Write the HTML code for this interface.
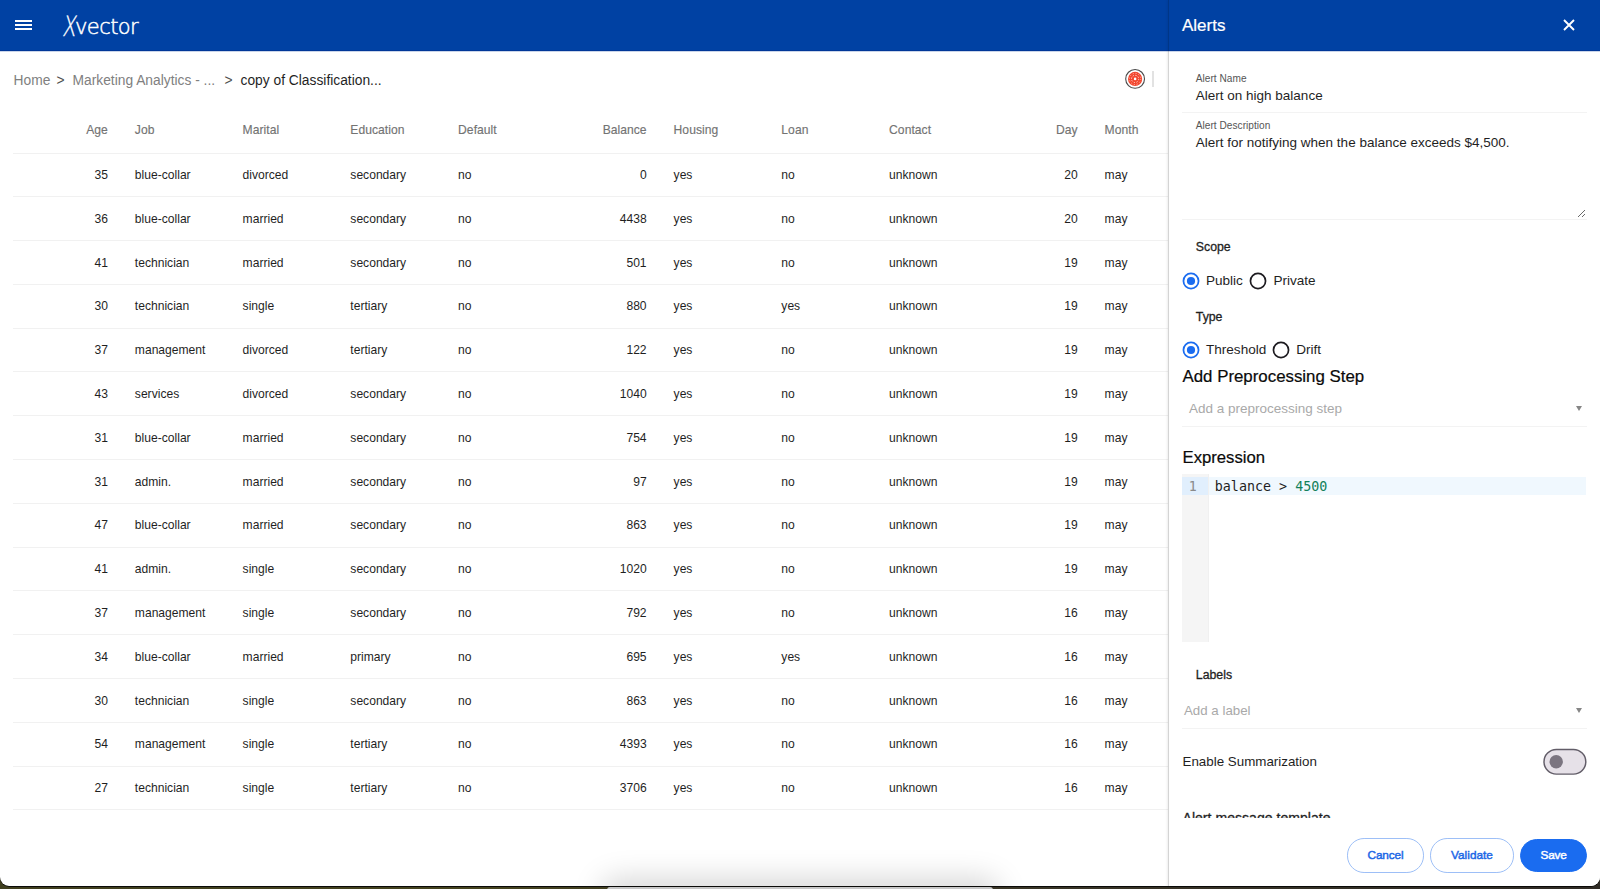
<!DOCTYPE html>
<html lang="en">
<head>
<meta charset="utf-8">
<title>Xvector - Alerts</title>
<style>
*{box-sizing:border-box;margin:0;padding:0}
html,body{width:1600px;height:889px;overflow:hidden}
body{background:linear-gradient(90deg,#3f3e1e 0,#45431f 30%,#3a3626 60%,#2f2b25 100%);font-family:"Liberation Sans",sans-serif;color:#212121;position:relative}
#win{position:absolute;left:0;top:0;width:1600px;height:886px;background:#fff;border-radius:0 0 9px 9px;overflow:hidden}
#winline{position:absolute;left:0;top:0;width:1600px;height:887px;background:#0a0a08;border-radius:0 0 9.5px 9.5px}
#dock{position:absolute;left:607px;top:887px;width:386px;height:4px;background:#c6c6c6;border-radius:3px 3px 0 0}
#dshadow{position:absolute;left:612px;top:890px;width:376px;height:12px;border-radius:8px;box-shadow:0 0 30px 11px rgba(0,0,0,.17)}
#topbar{position:absolute;left:0;top:0;width:1600px;height:52px;background:linear-gradient(#0041a3 0,#0041a3 49.6px,#003596 50.6px,#003596 51px,rgba(0,53,150,.25) 51.4px,rgba(0,53,150,0) 52px)}
.abs{position:absolute;white-space:nowrap}
/* hamburger */
#ham i{position:absolute;left:15.4px;width:16.2px;height:2px;background:#fff;display:block}
/* logo */
#logo{left:74.9px;top:12px;color:#fff;font-family:"DejaVu Sans Light","DejaVu Sans",sans-serif;font-weight:200;font-size:21px;line-height:30px;letter-spacing:-.55px;-webkit-text-stroke:.5px #fff}
#logo .x{position:absolute;left:-14px;top:-.5px;font-size:28px;line-height:30px;letter-spacing:0;display:block;transform-origin:0 100%;transform:scaleX(.7) skewX(-12deg);-webkit-text-stroke:.35px #fff}
/* breadcrumb */
#crumb{left:0;top:71.5px;font-size:13.8px;line-height:18px;color:#808080}
#crumb span{position:absolute;top:0}
#crumb .sep{color:#505050}
#crumb .cur{color:#1f1f1f}
/* table */
#tbl{position:absolute;left:13px;top:106px;width:1185px;border-collapse:collapse;table-layout:fixed;font-size:12.1px}
#tbl th,#tbl td{width:107.75px;height:43.8px;padding:.4px 12.9px 0 14.1px;text-align:left;font-weight:normal;border-bottom:1px solid #f1f1f1;white-space:nowrap;overflow:hidden}
#tbl th{color:#737373;height:47px;padding-top:.5px;padding-bottom:0;letter-spacing:.04px;-webkit-text-stroke:.15px #737373}
#tbl td{color:#1f1f1f}
#tbl .r{text-align:right}
/* panel */
#panel{position:absolute;left:1168px;top:0;width:432px;height:886px;background:#fff}
#pline{position:absolute;left:1168px;top:0;width:1px;height:886px;background:rgba(0,0,0,.17);box-shadow:-1px 0 2px rgba(0,0,0,.10);z-index:5}
#phead{position:absolute;left:0;top:0;width:432px;height:52px;background:linear-gradient(#0041a3 0,#0041a3 49.6px,#003596 50.6px,#003596 51px,rgba(0,53,150,.25) 51.4px,rgba(0,53,150,0) 52px)}

#ptitle{left:14px;top:16.4px;font-size:17px;line-height:20px;color:#fff;-webkit-text-stroke:.2px #fff}
#pclose{position:absolute;left:395.15px;top:19.3px;width:12px;height:12px}
.lbl{font-size:10.1px;line-height:12px;color:#555;letter-spacing:.03px}
.val{font-size:13.5px;line-height:16px;color:#1f1f1f}
.hl{position:absolute;left:14px;width:404.6px;height:1px;background:#f3f3f3}
.sec{font-size:12.3px;line-height:14px;color:#1f1f1f;-webkit-text-stroke:.3px #1f1f1f}
.rl{font-size:13.55px;line-height:16px;color:#1f1f1f}
.h2{font-size:16.85px;line-height:20px;color:#0a0a0a;-webkit-text-stroke:.2px #0a0a0a}
.ph{font-size:13.5px;line-height:16px;color:#a9a9a9}
.tri{position:absolute;width:0;height:0;border-left:3.4px solid transparent;border-right:3.4px solid transparent;border-top:5.8px solid #868686}
#ed{position:absolute;left:14.2px;top:473.6px;width:404px;height:168.1px;background:#fff}
#ed .gut{position:absolute;left:0;top:0;width:27.3px;height:168.1px;background:linear-gradient(#f5f5f5 0,#f5f5f5 3.1px,#e1effd 3.1px,#e1effd 21.1px,#f5f5f5 21.1px);border-right:1.5px solid #f0f0f0}
#ed .act{position:absolute;left:0;top:3.1px;width:404px;height:18px;background:#f0f8fe}
#ed .ln{left:6.6px;top:4px;font-family:"DejaVu Sans Mono","Liberation Mono",monospace;font-size:13.3px;line-height:18px;color:#8a8a8a}
#ed .code{left:32.6px;top:4.4px;font-family:"DejaVu Sans Mono","Liberation Mono",monospace;font-size:13.35px;line-height:18px;color:#1f1f1f}
#ed .num{color:#12805a}
#clip{position:absolute;left:0;top:51px;width:432px;height:767.4px;overflow:hidden}
.btn{position:absolute;top:838.4px;height:34.2px;border-radius:17.1px;border:1px solid #9dbff7;background:#fff;color:#1a66e6;font-size:11.8px;-webkit-text-stroke:.45px currentColor;letter-spacing:-.15px;line-height:32.6px;text-align:center}
.btn.fill{background:#1a6cf0;border-color:#1a6cf0;color:#fff;top:838.9px;height:33.1px;line-height:31.6px}
</style>
</head>
<body>
<div id="winline"></div>
<div id="dock"></div>
<div id="win">
  <div id="topbar">
    <div id="ham"><i style="top:19.6px"></i><i style="top:24px"></i><i style="top:28.4px"></i></div>
    <div id="logo" class="abs"><span class="x">X</span>vector</div>
  </div>
  <div id="crumb" class="abs"><span style="left:13.5px">Home</span> <span class="sep" style="left:56.5px">&gt;</span> <span style="left:72.5px">Marketing Analytics - ...</span> <span class="sep" style="left:224.5px">&gt;</span> <span class="cur" style="left:240.5px">copy of Classification...</span></div>
  <svg class="abs" style="left:1124px;top:68px;width:22px;height:22px" viewBox="0 0 22 22">
    <circle cx="11.1" cy="10.9" r="9.4" fill="#fff" stroke="#4a4a4a" stroke-width="1.1"/>
    <circle cx="11.1" cy="10.9" r="7.1" fill="#f2452d"/>
    <circle cx="11.1" cy="10.9" r="1.3" fill="#fff"/>
    <circle cx="11.1" cy="10.9" r="3.6" fill="none" stroke="#ffd9d2" stroke-width="1" stroke-dasharray="1.3 1.5"/>
    <circle cx="11.1" cy="10.9" r="5.6" fill="none" stroke="#ffc4ba" stroke-width=".8" stroke-dasharray="1.2 1.7"/>
  </svg>
  <div class="abs" style="left:1152px;top:71px;width:1.6px;height:16px;background:#e2e2e2"></div>
  <table id="tbl">
    <tr><th class="r">Age</th><th>Job</th><th>Marital</th><th>Education</th><th>Default</th><th class="r">Balance</th><th>Housing</th><th>Loan</th><th>Contact</th><th class="r">Day</th><th>Month</th></tr>
    <tr><td class="r">35</td><td>blue-collar</td><td>divorced</td><td>secondary</td><td>no</td><td class="r">0</td><td>yes</td><td>no</td><td>unknown</td><td class="r">20</td><td>may</td></tr>
    <tr><td class="r">36</td><td>blue-collar</td><td>married</td><td>secondary</td><td>no</td><td class="r">4438</td><td>yes</td><td>no</td><td>unknown</td><td class="r">20</td><td>may</td></tr>
    <tr><td class="r">41</td><td>technician</td><td>married</td><td>secondary</td><td>no</td><td class="r">501</td><td>yes</td><td>no</td><td>unknown</td><td class="r">19</td><td>may</td></tr>
    <tr><td class="r">30</td><td>technician</td><td>single</td><td>tertiary</td><td>no</td><td class="r">880</td><td>yes</td><td>yes</td><td>unknown</td><td class="r">19</td><td>may</td></tr>
    <tr><td class="r">37</td><td>management</td><td>divorced</td><td>tertiary</td><td>no</td><td class="r">122</td><td>yes</td><td>no</td><td>unknown</td><td class="r">19</td><td>may</td></tr>
    <tr><td class="r">43</td><td>services</td><td>divorced</td><td>secondary</td><td>no</td><td class="r">1040</td><td>yes</td><td>no</td><td>unknown</td><td class="r">19</td><td>may</td></tr>
    <tr><td class="r">31</td><td>blue-collar</td><td>married</td><td>secondary</td><td>no</td><td class="r">754</td><td>yes</td><td>no</td><td>unknown</td><td class="r">19</td><td>may</td></tr>
    <tr><td class="r">31</td><td>admin.</td><td>married</td><td>secondary</td><td>no</td><td class="r">97</td><td>yes</td><td>no</td><td>unknown</td><td class="r">19</td><td>may</td></tr>
    <tr><td class="r">47</td><td>blue-collar</td><td>married</td><td>secondary</td><td>no</td><td class="r">863</td><td>yes</td><td>no</td><td>unknown</td><td class="r">19</td><td>may</td></tr>
    <tr><td class="r">41</td><td>admin.</td><td>single</td><td>secondary</td><td>no</td><td class="r">1020</td><td>yes</td><td>no</td><td>unknown</td><td class="r">19</td><td>may</td></tr>
    <tr><td class="r">37</td><td>management</td><td>single</td><td>secondary</td><td>no</td><td class="r">792</td><td>yes</td><td>no</td><td>unknown</td><td class="r">16</td><td>may</td></tr>
    <tr><td class="r">34</td><td>blue-collar</td><td>married</td><td>primary</td><td>no</td><td class="r">695</td><td>yes</td><td>yes</td><td>unknown</td><td class="r">16</td><td>may</td></tr>
    <tr><td class="r">30</td><td>technician</td><td>single</td><td>secondary</td><td>no</td><td class="r">863</td><td>yes</td><td>no</td><td>unknown</td><td class="r">16</td><td>may</td></tr>
    <tr><td class="r">54</td><td>management</td><td>single</td><td>tertiary</td><td>no</td><td class="r">4393</td><td>yes</td><td>no</td><td>unknown</td><td class="r">16</td><td>may</td></tr>
    <tr><td class="r">27</td><td>technician</td><td>single</td><td>tertiary</td><td>no</td><td class="r">3706</td><td>yes</td><td>no</td><td>unknown</td><td class="r">16</td><td>may</td></tr>
  </table>
  <div id="dshadow"></div>
  <div id="pline"></div>
  <div id="panel">
    <div id="phead">
      <div id="ptitle" class="abs">Alerts</div>
      <svg id="pclose" viewBox="0 0 12 12"><path d="M1 1 L11 11 M11 1 L1 11" stroke="#fff" stroke-width="1.9" fill="none"/></svg>
    </div>
    <div class="abs lbl" style="left:27.8px;top:73.2px">Alert Name</div>
    <div class="abs val" style="left:27.8px;top:87.8px">Alert on high balance</div>
    <div class="hl" style="top:112px"></div>
    <div class="abs lbl" style="left:27.8px;top:119.9px">Alert Description</div>
    <div class="abs val" style="left:27.8px;top:135.3px">Alert for notifying when the balance exceeds $4,500.</div>
    <svg class="abs" style="left:409.4px;top:209.3px;width:9px;height:9px" viewBox="0 0 9 9"><path d="M1 8 L8 1 M5 8 L8 5" stroke="#6a6a6a" stroke-width="1" fill="none"/></svg>
    <div class="hl" style="top:219px"></div>
    <div class="abs sec" style="left:27.8px;top:239.5px">Scope</div>
    <svg class="abs" style="left:14.00px;top:271.9px;width:18px;height:18px" viewBox="0 0 18 18"><circle cx="9" cy="9" r="7.55" fill="#fff" stroke="#1a6cf0" stroke-width="1.75"/><circle cx="9" cy="9" r="4.1" fill="#1a6cf0"/></svg>
    <div class="abs rl" style="left:38px;top:273px">Public</div>
    <svg class="abs" style="left:80.90px;top:271.9px;width:18px;height:18px" viewBox="0 0 18 18"><circle cx="9" cy="9" r="7.55" fill="#fff" stroke="#1d1b20" stroke-width="1.7"/></svg>
    <div class="abs rl" style="left:105.4px;top:273px">Private</div>
    <div class="abs sec" style="left:27.8px;top:309.6px">Type</div>
    <svg class="abs" style="left:14.00px;top:340.8px;width:18px;height:18px" viewBox="0 0 18 18"><circle cx="9" cy="9" r="7.55" fill="#fff" stroke="#1a6cf0" stroke-width="1.75"/><circle cx="9" cy="9" r="4.1" fill="#1a6cf0"/></svg>
    <div class="abs rl" style="left:38px;top:342px">Threshold</div>
    <svg class="abs" style="left:103.90px;top:340.8px;width:18px;height:18px" viewBox="0 0 18 18"><circle cx="9" cy="9" r="7.55" fill="#fff" stroke="#1d1b20" stroke-width="1.7"/></svg>
    <div class="abs rl" style="left:128.3px;top:342px">Drift</div>
    <div class="abs h2" style="left:14.5px;top:366.8px">Add Preprocessing Step</div>
    <div class="abs ph" style="left:21px;top:401px">Add a preprocessing step</div>
    <div class="tri" style="left:408px;top:405.5px"></div>
    <div class="hl" style="top:426px"></div>
    <div class="abs h2" style="left:14.5px;top:447.8px;font-size:16.7px">Expression</div>
    <div id="ed">
      <div class="act"></div>
      <div class="gut"></div>
      <div class="abs ln">1</div>
      <div class="abs code">balance &gt; <span class="num">4500</span></div>
    </div>
    <div class="abs sec" style="left:27.8px;top:668px">Labels</div>
    <div class="abs ph" style="left:16px;top:703px;font-size:13.3px">Add a label</div>
    <div class="tri" style="left:408px;top:707.5px"></div>
    <div class="hl" style="top:728px"></div>
    <div class="abs val" style="left:14.5px;top:754px;font-size:13.37px">Enable Summarization</div>
    <svg class="abs" style="left:374px;top:747px;width:46px;height:30px" viewBox="0 0 46 30"><rect x="2" y="2.4" width="41.8" height="24.7" rx="12.35" fill="#e6e1e8" stroke="#625d68" stroke-width="1.45"/><circle cx="14.2" cy="14.7" r="6.7" fill="#7b7580"/></svg>
    <div id="clip"><div class="abs val" style="left:14.5px;top:758.6px;font-size:14.1px;-webkit-text-stroke:.3px #1f1f1f">Alert message template</div></div>
    <div class="btn" style="left:179px;width:77px">Cancel</div>
    <div class="btn" style="left:262px;width:84px;letter-spacing:.02px">Validate</div>
    <div class="btn fill" style="left:352.3px;width:66.6px">Save</div>
  </div>
</div>
</body>
</html>
